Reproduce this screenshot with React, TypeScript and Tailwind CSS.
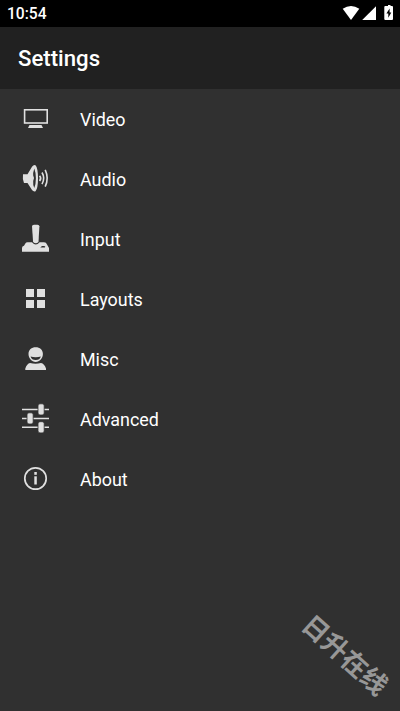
import type { ReactNode } from "react";

const items: { label: string; icon: ReactNode }[] = [
  {
    label: "Video",
    icon: (
      <>
        <rect x="14.6" y="14.8" width="22.600" height="13.200" fill="none" stroke="currentColor" strokeWidth="1.600" />
        <path d="M19.500 30h12l1.500 3H18z" />
      </>
    ),
  },
  {
    label: "Audio",
    icon: (
      <>
        <path fillRule="evenodd" d="M13 19.200H17.500L22 11.800Q23.500 9.600 25.500 10.200Q28 13 28 23.300Q28 33.500 25.500 36.300Q23.500 37 22 35L17.500 28H14Q12.300 23.500 13 19.200ZM24.300 13.500Q22.800 18 23.200 20.500Q25 23.300 23.200 26Q22.800 29.500 24.300 33Q25.900 29 25.900 23.300Q25.900 17.500 24.300 13.500Z" />
        <path d="M29.600 20.800q2.200 2.500 0 5.300M32 17.500q3.400 5.800 0 11.600M35.200 14.800q4 8.400 0 16.800" fill="none" stroke="currentColor" strokeWidth="1.600" />
      </>
    ),
  },
  {
    label: "Input",
    icon: (
      <>
        <path d="M22 11.300Q22 9.700 24 9.700h3.500Q29.400 9.700 29.400 11.300L28.500 27Q25.800 29.500 23.100 27Z" />
        <path fillRule="evenodd" d="M15.500 28.300Q16 27.300 17.500 27.300H22Q25.800 31.800 29.600 27.300H34Q36.300 27.300 37 29.500L39 33V36.700H12V33Q12 31.300 14 30.800ZM30.300 32.400L32 31H34.300Q36.200 31.700 34.800 32.500Z" />
      </>
    ),
  },
  {
    label: "Layouts",
    icon: <path d="M16 14h8v8h-8zM27 14h8v8h-8zM16 25h8v8h-8zM27 25h8v8h-8z" />,
  },
  {
    label: "Misc",
    icon: (
      <>
        <path fillRule="evenodd" d="M25.700 12.300C29.900 12.300 32.900 15 32.900 19S29.700 27 25.700 27S18.500 23 18.500 19S21.500 12.300 25.700 12.300ZM20.600 21.500Q21.500 25 25.700 25T30.800 21.500Q28.500 22.200 25.700 22.200T20.600 21.500Z" />
        <path d="M15.300 35V33.500Q17 28.500 20 28Q25.600 29.500 31 28Q34.300 28.500 36 33.500V35Z" />
      </>
    ),
  },
  {
    label: "Advanced",
    icon: (
      <>
        <path d="M12 14.500h27M12 23.500h27M12 32.300h27" stroke="currentColor" strokeWidth="1.600" />
        <g stroke="#303030" strokeWidth="0.800">
          <rect x="28" y="8.800" width="6.200" height="11.200" rx="2" />
          <rect x="17" y="17.800" width="6.200" height="11.200" rx="2" />
          <rect x="28" y="26.700" width="6.200" height="11.200" rx="2" />
        </g>
      </>
    ),
  },
  {
    label: "About",
    icon: (
      <>
        <circle cx="25.500" cy="23.500" r="10.700" fill="none" stroke="currentColor" strokeWidth="1.700" />
        <rect x="24.300" y="17" width="2.500" height="2.800" />
        <rect x="24.300" y="21.300" width="2.500" height="8.200" />
      </>
    ),
  },
];

export default function App() {
  return (
    <div className="relative flex h-[711px] w-[400px] flex-col overflow-hidden bg-[#303030] font-[Roboto,sans-serif] text-white">
      <div className="flex h-[27px] shrink-0 items-center justify-between bg-black pl-[7px]">
        <span className="pt-[2px] text-[15.6px] leading-[27px] font-medium">10:54</span>
        <svg width="70" height="27" viewBox="0 0 70 27" fill="white">
          <path d="M12.700 8.700Q21 3.300 29.300 8.700L21 19.900Z" />
          <path d="M46 6.300V20H32.200Z" />
          <path fillRule="evenodd" d="M56.500 6H58V5H60.500V6H62Q63 6 63 7V19Q63 20 62 20H55.300Q54.300 20 54.300 19V7Q54.300 6 55.300 6ZM59.600 8.500L56.400 13.600H58.300V17.800L61.300 12.400H59.600Z" />
        </svg>
      </div>
      <header className="flex h-[62px] shrink-0 items-center bg-[#212121] pl-[18px]">
        <h1 className="text-[22.2px] leading-[60px] font-medium">Settings</h1>
      </header>
      <nav className="pt-px">
        {items.map(({ label, icon }) => (
          <div key={label} className="flex h-[60px] items-center gap-[10px] pl-[10px]">
            <svg width="60" height="50" viewBox="0 0 60 50" fill="currentColor" className="text-[#e0e0e0]">
              {icon}
            </svg>
            <span className="text-[17.9px] leading-[60px]">{label}</span>
          </div>
        ))}
      </nav>
      <div className="absolute top-[654px] left-[345.5px] -translate-x-1/2 -translate-y-1/2 rotate-[42deg] font-['Noto_Sans_CJK_SC',sans-serif] text-[26px] leading-none font-bold whitespace-nowrap text-[#979797]">
        日升在线
      </div>
    </div>
  );
}
